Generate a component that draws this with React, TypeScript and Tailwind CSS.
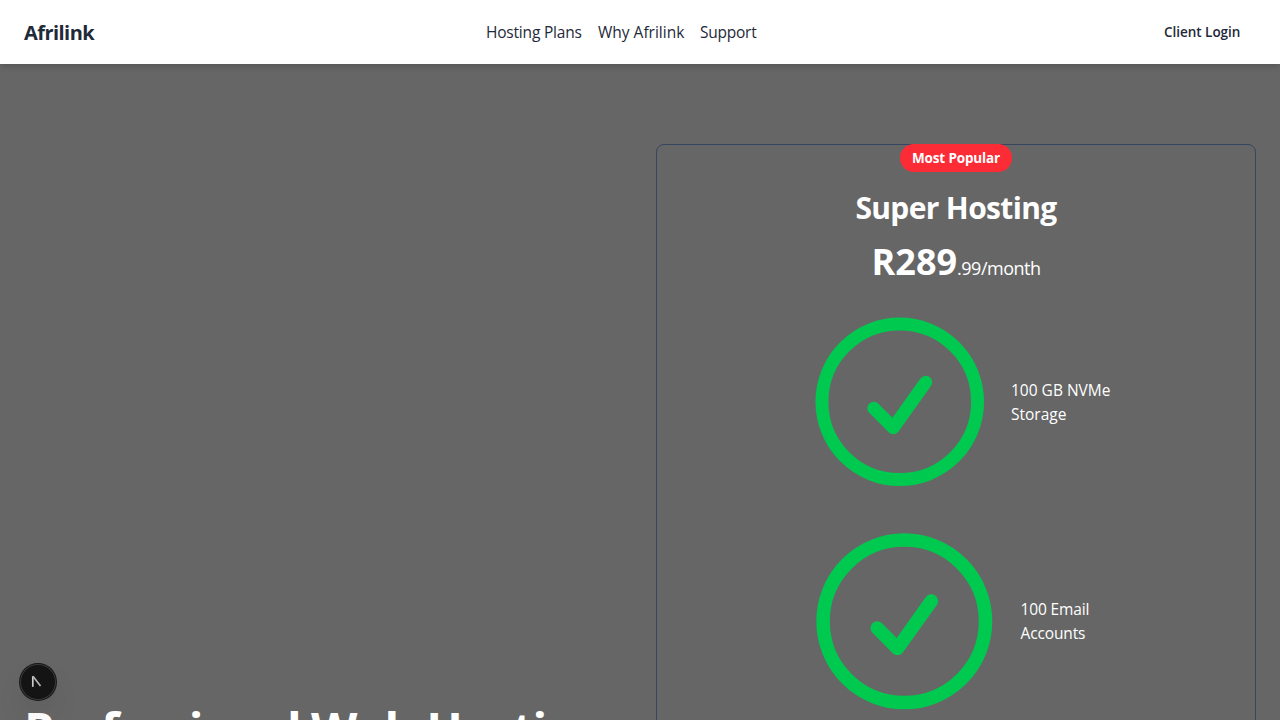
import React from "react";

function CheckCircle({ className }: { className: string }) {
  return (
    <svg
      className={className}
      viewBox="0 0 24 24"
      fill="none"
      stroke="currentColor"
      strokeWidth={1.5}
      strokeLinecap="round"
      strokeLinejoin="round"
      aria-hidden="true"
    >
      <path d="M9 12.75 11.25 15 15 9.75M21 12a9 9 0 1 1-18 0 9 9 0 0 1 18 0Z" />
    </svg>
  );
}

function Header() {
  return (
    <header className="relative z-10 flex h-16 shrink-0 items-center bg-white text-gray-800 shadow-md">
      <div className="w-[486px] pt-0.5 pl-6 text-[20px] font-bold leading-7 tracking-[-0.55px]">Afrilink</div>
      <nav className="flex grow gap-4 text-[15.5px] leading-6 whitespace-nowrap">
        <a className="w-24 tracking-[-0.2px]">Hosting Plans</a>
        <a className="w-[86px] tracking-[0px]">Why Afrilink</a>
        <a className="tracking-[-0.25px]">Support</a>
      </nav>
      <a className="w-[116px] text-[13.5px] font-semibold leading-5 whitespace-nowrap tracking-[-0.03px]">Client Login</a>
    </header>
  );
}

function PlanCard() {
  return (
    <section className="flex h-[700px] w-[600px] flex-col items-center rounded-lg border border-[#364560] text-white">
      <div className="-mt-px flex h-7 w-28 items-center justify-center rounded-full bg-[#fb2c36] text-[13.5px] font-bold whitespace-nowrap tracking-[-0.15px]">
        Most Popular
      </div>
      <h2 className="mt-[18px] text-[30px] font-bold leading-9 whitespace-nowrap tracking-[-0.65px]">Super Hosting</h2>
      <p className="mt-4 flex h-10 items-baseline whitespace-nowrap leading-10">
        <span className="text-[36px] font-bold tracking-[0px]">R289</span>
        <span className="text-[18px] tracking-[-0.5px]">.99/month</span>
      </p>
      <ul className="mt-[15.75px] flex w-[321px] flex-col gap-[7.25px] text-[15.5px] leading-6 whitespace-nowrap">
        <li className="flex items-center">
          <CheckCircle className="mr-2 size-[207.5px] shrink-0 text-[#00c950]" />
          <span className="tracking-[0px]">100 GB NVMe<br />Storage</span>
        </li>
        <li className="flex items-center">
          <CheckCircle className="mr-2 ml-[0.5px] size-[216.6px] shrink-0 text-[#00c950]" />
          <span className="tracking-[-0.15px]">100 Email<br />Accounts</span>
        </li>
      </ul>
    </section>
  );
}

export default function App() {
  return (
    <div className="relative flex h-[720px] w-[1280px] flex-col overflow-hidden bg-[#666666] font-['Open_Sans','Noto_Sans',sans-serif]">
      <Header />
      <main className="flex h-[656px] items-start gap-8 overflow-hidden px-6 pt-20">
        <div className="w-[600px] shrink-0 pt-[556px]">
          <h1 className="text-[48px] font-bold leading-[60px] whitespace-nowrap text-white">
            <span className="tracking-[-1.65px]">Professional </span>
            <span className="tracking-[-0.6px]">Web </span>
            <span className="tracking-[-1.2px]">Hosting</span>
          </h1>
        </div>
        <PlanCard />
      </main>
      <button
        aria-label="Developer tools"
        className="absolute bottom-5 left-5 flex size-9 items-center justify-center rounded-full bg-[#141414] shadow-[0_0_0_1px_#171717,inset_0_0_0_1px_#393939,0_16px_32px_-8px_rgba(0,0,0,0.24)]"
      >
        <svg className="size-9" viewBox="0 0 36 36" fill="none" aria-hidden="true">
          <path d="M12.8 22.8V12.2" stroke="#cccccc" strokeWidth="1.7" />
          <path d="M13 12.2 20.5 22" stroke="#b4b4b4" strokeWidth="1.7" />
        </svg>
      </button>
    </div>
  );
}
